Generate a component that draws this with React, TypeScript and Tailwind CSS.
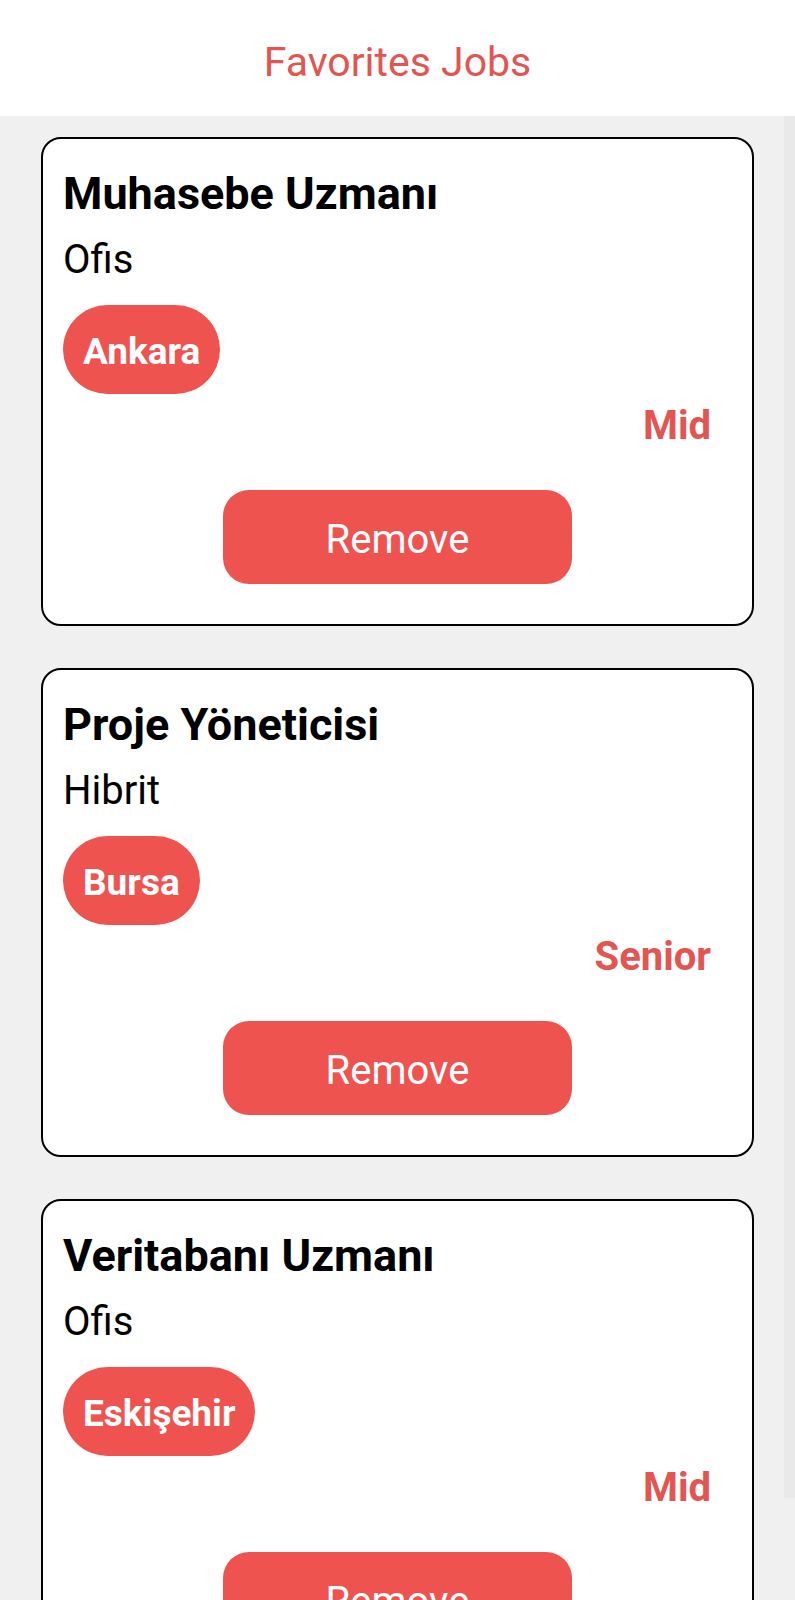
import React from "react";

type Job = { title: string; type: string; city: string; level: string };

const jobs: Job[] = [
  { title: "Muhasebe Uzmanı", type: "Ofis", city: "Ankara", level: "Mid" },
  { title: "Proje Yöneticisi", type: "Hibrit", city: "Bursa", level: "Senior" },
  { title: "Veritabanı Uzmanı", type: "Ofis", city: "Eskişehir", level: "Mid" },
];

function JobCard({ job }: { job: Job }) {
  return (
    <div className="mx-[41px] flex flex-col rounded-[20px] border-2 border-black bg-white pl-[20px] pr-[41px] pt-[28px] pb-[40px]">
      <div className="text-[45px] font-bold leading-[53px] text-black">{job.title}</div>
      <div className="mt-[16px] text-[40px] leading-[47px] text-black">{job.type}</div>
      <div className="mt-[22px] flex">
        <div className="flex h-[89px] items-center rounded-full bg-[#ef5350] px-[20px] pt-[5px] text-[37px] font-bold text-white">
          {job.city}
        </div>
      </div>
      <div className="mt-[8px] text-right text-[40px] font-bold leading-[47px] text-[#e35552]">{job.level}</div>
      <div className="mt-[41px] flex justify-center pl-[21px]">
        <button className="flex h-[94px] w-[349px] items-center justify-center rounded-[26px] bg-[#ef5350] pt-[5px] text-[40px] text-white">
          Remove
        </button>
      </div>
    </div>
  );
}

export default function App() {
  return (
    <div className="relative h-[1600px] overflow-hidden bg-[#f0f0f0]" style={{ fontFamily: "Roboto, 'Noto Sans', sans-serif" }}>
      <div className="flex h-[116px] items-center justify-center bg-white pt-[10px]">
        <div className="text-[41px] text-[#e35552]">Favorites Jobs</div>
      </div>
      <div className="flex flex-col gap-[42px] pt-[21px]">
        {jobs.map((j) => (
          <JobCard key={j.title} job={j} />
        ))}
      </div>
      <div className="absolute right-0 top-[116px] h-[1382px] w-[11px] bg-[#e9e9e9]" />
    </div>
  );
}
